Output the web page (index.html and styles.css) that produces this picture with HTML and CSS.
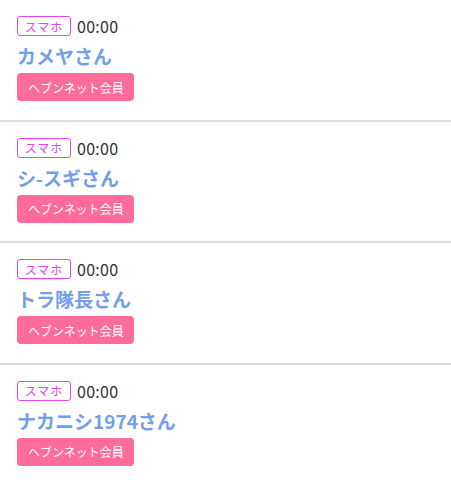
FILE: index.html
```html
<!DOCTYPE html>
<html lang="ja">
<head>
    <meta charset="UTF-8">
    <meta name="viewport" content="width=device-width, initial-scale=1.0">
    <title>Visitors</title>
    <link rel="stylesheet" href="styles.css">
</head>
<body>

<ul class="visitor-list">
    <li class="visitor">
        <div class="visitor-meta">
            <span class="device">スマホ</span>
            <span class="time">00:00</span>
        </div>
        <div class="visitor-name">カメヤさん</div>
        <span class="member-tag">ヘブンネット会員</span>
    </li>
    <li class="visitor">
        <div class="visitor-meta">
            <span class="device">スマホ</span>
            <span class="time">00:00</span>
        </div>
        <div class="visitor-name">シ-スギさん</div>
        <span class="member-tag">ヘブンネット会員</span>
    </li>
    <li class="visitor">
        <div class="visitor-meta">
            <span class="device">スマホ</span>
            <span class="time">00:00</span>
        </div>
        <div class="visitor-name">トラ隊長さん</div>
        <span class="member-tag">ヘブンネット会員</span>
    </li>
    <li class="visitor">
        <div class="visitor-meta">
            <span class="device">スマホ</span>
            <span class="time">00:00</span>
        </div>
        <div class="visitor-name">ナカニシ1974さん</div>
        <span class="member-tag">ヘブンネット会員</span>
    </li>
</ul>

</body>
</html>
```

FILE: styles.css
```css
body {
    margin: 0;
    background: #fff;
    font-family: "Noto Sans CJK JP", "Noto Sans", sans-serif;
    color: #333;
}

.visitor-list {
    list-style: none;
    margin: 0;
    padding: 0;
}

.visitor {
    height: 121.5px;
    box-sizing: border-box;
    padding: 16px 17px 0;
    border-bottom: 2px solid #dcdcdc;
}

.visitor:last-child {
    border-bottom: none;
}

.visitor-meta {
    display: flex;
    align-items: center;
    gap: 6px;
    height: 20px;
}

.device {
    display: inline-flex;
    align-items: center;
    justify-content: center;
    box-sizing: border-box;
    width: 54px;
    height: 20px;
    border: 1px solid #e445ee;
    border-radius: 3px;
    color: #e445ee;
    font-size: 12px;
    letter-spacing: 1px;
}

.time {
    font-size: 16px;
    color: #333;
    letter-spacing: 0.3px;
}

.visitor-name {
    margin-top: 6px;
    height: 28px;
    line-height: 28px;
    font-size: 19px;
    font-weight: bold;
    color: #739ee9;
}

.member-tag {
    display: inline-flex;
    align-items: center;
    box-sizing: border-box;
    margin-top: 3px;
    height: 28px;
    padding: 0 10px 0 11px;
    background: #ff6b9a;
    border-radius: 4px;
    color: #fff;
    font-size: 12px;
}
```
